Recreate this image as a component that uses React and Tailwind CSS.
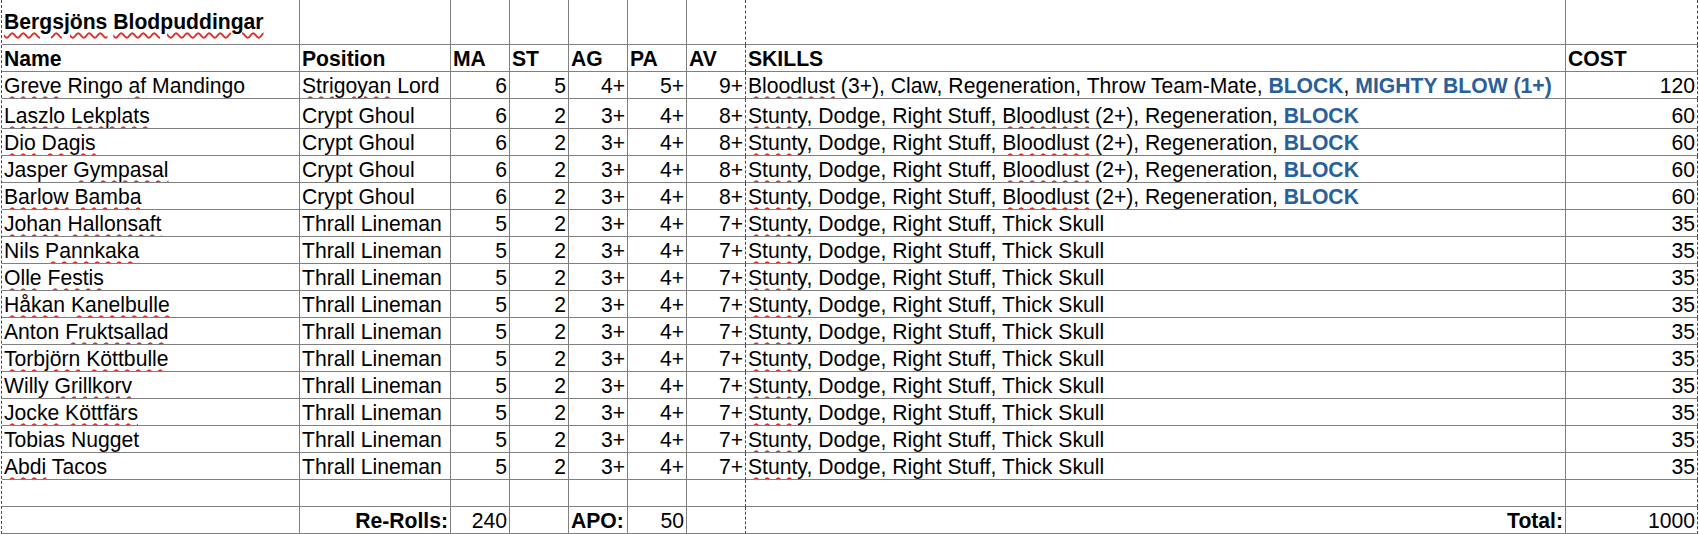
import React from 'react'

const TYPOS = new Set([
  'Bergsjöns', 'Blodpuddingar', 'Greve', 'af', 'Strigoyan', 'Laszlo', 'Lekplats',
  'Dio', 'Dagis', 'Gympasal', 'Barlow', 'Bamba', 'Johan', 'Hallonsaft', 'Pannkaka',
  'Olle', 'Festis', 'Håkan', 'Kanelbulle', 'Fruktsallad', 'Torbjörn', 'Köttbulle',
  'Grillkorv', 'Jocke', 'Köttfärs', 'Abdi', 'Bloodlust', 'Stunty',
])

const GHOUL_SKILLS = [['Stunty, Dodge, Right Stuff, Bloodlust (2+), Regeneration, '], ['BLOCK', true]]
const THRALL_SKILLS = [['Stunty, Dodge, Right Stuff, Thick Skull']]

const players = [
  {
    name: 'Greve Ringo af Mandingo', pos: 'Strigoyan Lord', ma: 6, st: 5, ag: '4+', pa: '5+', av: '9+',
    skills: [['Bloodlust (3+), Claw, Regeneration, Throw Team-Mate, '], ['BLOCK', true], [', '], ['MIGHTY BLOW (1+)', true]],
    cost: 120,
  },
  { name: 'Laszlo Lekplats', pos: 'Crypt Ghoul', ma: 6, st: 2, ag: '3+', pa: '4+', av: '8+', skills: GHOUL_SKILLS, cost: 60, tall: true },
  { name: 'Dio Dagis', pos: 'Crypt Ghoul', ma: 6, st: 2, ag: '3+', pa: '4+', av: '8+', skills: GHOUL_SKILLS, cost: 60 },
  { name: 'Jasper Gympasal', pos: 'Crypt Ghoul', ma: 6, st: 2, ag: '3+', pa: '4+', av: '8+', skills: GHOUL_SKILLS, cost: 60 },
  { name: 'Barlow Bamba', pos: 'Crypt Ghoul', ma: 6, st: 2, ag: '3+', pa: '4+', av: '8+', skills: GHOUL_SKILLS, cost: 60 },
  ...['Johan Hallonsaft', 'Nils Pannkaka', 'Olle Festis', 'Håkan Kanelbulle', 'Anton Fruktsallad',
    'Torbjörn Köttbulle', 'Willy Grillkorv', 'Jocke Köttfärs', 'Tobias Nugget', 'Abdi Tacos'].map(name => ({
    name, pos: 'Thrall Lineman', ma: 5, st: 2, ag: '3+', pa: '4+', av: '7+', skills: THRALL_SKILLS, cost: 35,
  })),
]

function Spell({ text }) {
  return text.split(/(\p{L}+)/u).map((t, i) =>
    TYPOS.has(t) ? (
      <span key={i} className="underline decoration-wavy decoration-[#e0302c] decoration-[1.5px] underline-offset-[3px]">{t}</span>
    ) : (
      <React.Fragment key={i}>{t}</React.Fragment>
    )
  )
}

const grid = 'grid grid-cols-[298px_151px_59px_59px_59px_59px_59px_820px_132px]'
const cell = 'flex items-end px-[2px] leading-[24px] whitespace-nowrap overflow-hidden border-r border-b border-[#808080]'
const dashed = '[border-right-style:dashed] border-r-[#4a4a4a]'

function Cell({ children, right, bold, className = '' }) {
  return (
    <div className={`${cell} ${right ? 'justify-end' : ''} ${bold ? 'font-bold' : ''} ${className}`}>
      <span>{children}</span>
    </div>
  )
}

function Row({ h, cells = [], center }) {
  const c = i => cells[i] || {}
  return (
    <div className={`${grid} ${h} ${center ? '[&>div]:items-center' : ''}`}>
      {[0, 1, 2, 3, 4, 5, 6, 7, 8].map(i => (
        <Cell key={i} right={c(i).right} bold={c(i).bold} className={i === 6 || i === 8 ? dashed : ''}>
          {c(i).v}
        </Cell>
      ))}
    </div>
  )
}

export default function App() {
  return (
    <div className="w-[1699px] h-[534px] bg-white text-black font-['Liberation_Sans',Arial,sans-serif] text-[21.15px] overflow-hidden">
      <div className="ml-px w-fit border-l border-dashed border-[#4a4a4a]">
        <Row h="h-[45px]" center cells={[{ v: <Spell text="Bergsjöns Blodpuddingar" />, bold: true }]} />
        <Row
          h="h-[27px]"
          cells={['Name', 'Position', 'MA', 'ST', 'AG', 'PA', 'AV', 'SKILLS', 'COST'].map(v => ({ v, bold: true }))}
        />
        {players.map(p => (
          <Row
            key={p.name}
            h={p.tall ? 'h-[30px]' : 'h-[27px]'}
            cells={[
              { v: <Spell text={p.name} /> },
              { v: <Spell text={p.pos} /> },
              { v: p.ma, right: true },
              { v: p.st, right: true },
              { v: p.ag, right: true },
              { v: p.pa, right: true },
              { v: p.av, right: true },
              {
                v: p.skills.map(([t, blue], i) =>
                  blue ? (
                    <span key={i} className="font-bold text-[#2a6099]">{t}</span>
                  ) : (
                    <Spell key={i} text={t} />
                  )
                ),
              },
              { v: p.cost, right: true },
            ]}
          />
        ))}
        <Row h="h-[27px]" />
        <Row
          h="h-[27px]"
          cells={[
            {},
            { v: 'Re-Rolls:', right: true, bold: true },
            { v: 240, right: true },
            {},
            { v: 'APO:', bold: true },
            { v: 50, right: true },
            {},
            { v: 'Total:', right: true, bold: true },
            { v: 1000, right: true },
          ]}
        />
      </div>
    </div>
  )
}
